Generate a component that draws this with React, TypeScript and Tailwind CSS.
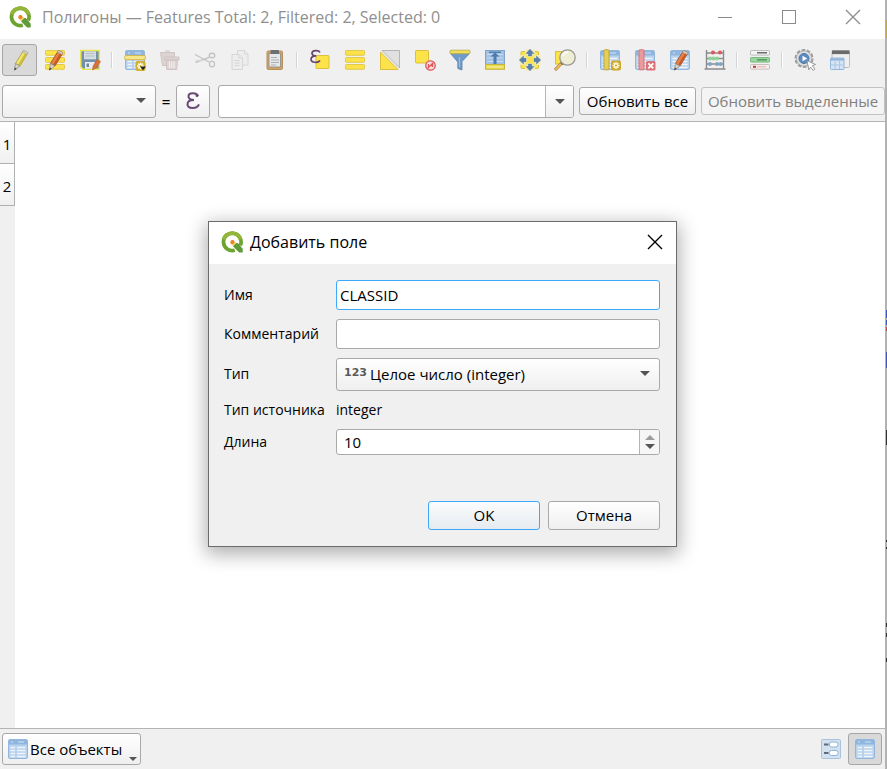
import { useState } from "react";
import type { ReactNode } from "react";

const Icon = ({ children }: { children: ReactNode }) => (
  <svg viewBox="0 0 22 22" aria-hidden="true" className="h-[22px] w-[22px] shrink-0">
    {children}
  </svg>
);

const QgisLogo = () => (
  <svg viewBox="0 0 24 24" aria-hidden="true" className="h-6 w-6 shrink-0">
    <path d="M20.300 15.500A8.800 8.800 0 1 0 14.800 20.300" fill="none" stroke="#6da32f" strokeWidth="3.700" />
    <path d="M3.600 9.500A8.800 8.800 0 0 1 20.400 9.500" fill="none" stroke="#93b53a" strokeWidth="3.700" />
    <path d="M14.500 13h3.300l4.900 5.700v3.800h-3.600l-6.100-6.200z" fill="#5f9b36" />
    <path d="M12 9.500l4.500 3.500-3.500 3.200-3-3.200z" fill="#f4cf78" />
    <circle cx="12.400" cy="12" r="2" fill="#ee7d23" />
  </svg>
);

const Table = () => (
  <g transform="translate(1 1)">
    <rect x=".5" y=".5" width="19" height="19" rx="1.500" fill="#b9d2ec" stroke="#93b6dc" />
    <rect x="1" y="1" width="18" height="4.500" fill="#8fb6df" />
    <path
      d="M2.500 8.500h4.500M9 8.500h8.500M2.500 11.500h4.500M9 11.500h8.500M2.500 14.500h4.500M9 14.500h8.500M2.500 17.500h4.500M9 17.500h8.500"
      stroke="#eef4fb"
      strokeWidth="1.500"
    />
    <path d="M3 3h2M10 3h6" stroke="#b9d3ee" strokeWidth="1.500" />
  </g>
);

const Pencil = ({ body, shade, dark }: { body: string; shade: string; dark: string }) => (
  <g>
    <path d="M14.500 1.500l4.500 2.300-8 13.200-4.600-2.500z" fill={body} stroke={dark} strokeWidth=".8" />
    <path d="M17 2.800l2 1-8 13.200-2-1.100z" fill={shade} />
    <path d="M14.500 1.500l4.500 2.300-1 1.700-4.500-2.400z" fill="#d8d5cd" stroke="#9d9a92" strokeWidth=".5" />
    <path d="M6.400 14.500l4.600 2.500-5.600 4.300z" fill="#d9d2c2" stroke="#888" strokeWidth=".7" />
    <path d="M5.400 21.300l.4-2.700 1.800 1.100z" fill="#333" />
  </g>
);

const YELLOW = "#fbe349";
const GOLD = "#dcbf3a";

const Gear = ({ fill, x, y }: { fill: string; x: number; y: number }) => (
  <g transform={`translate(${x} ${y})`}>
    <rect width="10" height="10" rx="2" fill={fill} />
    <path
      d="M5 1.500v7M1.500 5h7M2.600 2.600l4.800 4.800M7.400 2.600L2.600 7.400"
      stroke="#fffbe0"
      strokeWidth="1.400"
    />
    <circle cx="5" cy="5" r="1.100" fill={fill} />
  </g>
);

const Stripes = () => (
  <g fill={YELLOW} stroke={GOLD} strokeWidth=".8">
    <rect x="1.500" y="1.500" width="19" height="4.800" rx=".8" />
    <rect x="1.500" y="8.500" width="19" height="4.800" rx=".8" />
    <rect x="1.500" y="15.500" width="19" height="4.800" rx=".8" />
  </g>
);

const orangePencil = <Pencil body="#e87f45" shade="#c65a28" dark="#8f4f30" />;

const icons: Record<string, ReactNode> = {
  edit: <Pencil body="#f0e56a" shade="#cdbb35" dark="#a59a4e" />,
  multi: (
    <>
      <Stripes />
      {orangePencil}
    </>
  ),
  save: (
    <>
      <path d="M1.800 1.500h18.500v18.800H4L1.800 18z" fill="#7390aa" stroke="#ede552" strokeWidth="1.500" />
      <rect x="5" y="2.300" width="12" height="8" fill="#d5dce2" />
      <path d="M6.500 4.500h9M6.500 7h9" stroke="#b4bfc8" />
      <rect x="6" y="13" width="10" height="6.800" fill="#e9edf0" />
      <rect x="7.500" y="14.500" width="2.500" height="3.500" fill="#6d879f" />
      <path d="M18.300 10.500l3.200 1.900-4.200 6.400-3.800 2.200.7-4.200z" fill="#df6f3a" stroke="#b45a30" strokeWidth=".6" />
    </>
  ),
  addFeature: (
    <>
      <Table />
      <rect x=".8" y="6.500" width="20.500" height="4.200" rx=".8" fill="#f5e68c" stroke="#d1b445" strokeWidth=".9" />
      <Gear fill="#d3ae2a" x={11.5} y={12} />
      <path d="M16 17.500h6l-3 3.800z" fill="#222" />
    </>
  ),
  trash: (
    <g stroke="#cfc4c3" strokeWidth="1" fill="#ddd3d2">
      <path d="M1.500 3.500h14v5h-3v8h-9z" />
      <path d="M6 2h5" />
      <path d="M5.500 8h14.500v3H5.500zM7 11h11.500l-.8 9.500H7.800z" />
      <path d="M10.500 12.500v6.500M12.800 12.500v6.500M15 12.500v6.500" stroke="#f6f2f2" />
    </g>
  ),
  cut: (
    <g fill="none" stroke="#c6c2c2" strokeWidth="1.400">
      <path d="M1 5.500l14 7.500M1.500 13.500l13.500-5" />
      <path d="M1.500 11.500h7" stroke="#dcd9d9" />
      <ellipse cx="18" cy="6.500" rx="2.800" ry="2.300" />
      <ellipse cx="18" cy="15" rx="2.500" ry="2.900" />
    </g>
  ),
  copy: (
    <g fill="#ededed" stroke="#d6d6d6" strokeWidth="1">
      <path d="M8.500 1.500h7l3.500 3.500v11H8.500z" />
      <path d="M15.500 1.500V5H19" />
      <path d="M3 5.500h7l3.500 3.500v11.500H3z" />
      <path d="M10 5.500V9h3.500M5.500 11.500h5M5.500 14h5M5.500 16.500h5" />
    </g>
  ),
  paste: (
    <>
      <rect x="3" y="2" width="15.500" height="18.500" rx="1.200" fill="#cfa468" stroke="#b98f58" />
      <rect x="5" y="4.500" width="11.500" height="13.500" fill="#e6e7e8" stroke="#8b8b8b" strokeWidth=".8" />
      <rect x="6.500" y="1" width="8.500" height="4" rx=".8" fill="#6c7073" />
      <path d="M7 8.500h6M7 11h8M7 13.500h8M7 16h5" stroke="#adb2b5" strokeWidth="1.200" />
    </>
  ),
  selectExpr: (
    <>
      <rect x="7" y="6.500" width="13" height="13" rx=".8" fill={YELLOW} stroke={GOLD} />
      <path
        d="M11 3.500C9.800.8 3 1.200 3 4.200c0 2 2.300 2.600 4.300 2.600-3 0-5.300.9-5.300 3.500 0 3.600 7.300 3.900 9 1.200"
        fill="none"
        stroke="#6a4772"
        strokeWidth="1.700"
      />
    </>
  ),
  selectAll: <Stripes />,
  invert: (
    <>
      <path d="M3 1.500h17.500V19z" fill="#e0e0e0" stroke="#b5b5b5" />
      <path d="M1.500 3L19 20.500H1.500z" fill={YELLOW} stroke={GOLD} />
    </>
  ),
  deselect: (
    <>
      <rect x="1.500" y="1.500" width="13" height="12.500" rx=".8" fill={YELLOW} stroke={GOLD} />
      <circle cx="16.500" cy="16.500" r="4.700" fill="#f8dddd" stroke="#dd5459" strokeWidth="1.300" />
      <path d="M13.500 19.500l6-6M14.500 15v3.500M18.500 14.500V18" stroke="#dd5459" strokeWidth="1.300" />
    </>
  ),
  filter: (
    <>
      <path d="M1.500 4.500l7.300 8.500v6.500l4.200 1.500v-8.500l7.500-8z" fill="#6f9bc9" stroke="#5b80aa" strokeWidth=".8" />
      <rect x="1" y="1.200" width="20" height="3.500" rx=".8" fill="#efdf56" stroke="#b5a64c" strokeWidth=".8" />
      <path d="M10.500 8v10" stroke="#9dbee0" strokeWidth="1.200" />
    </>
  ),
  moveTop: (
    <>
      <rect x="1.500" y="1.500" width="19" height="14" fill="#a3c2e3" stroke="#80a4cb" />
      <path d="M3 5.500h16M3 9h16M3 12.500h16" stroke="#c9dcef" />
      <rect x="1.500" y="15.500" width="19" height="4.800" fill="#e9da4c" stroke="#c6b340" />
      <path d="M11 3.500l4.500 4h-3v7.500H9.500V7.500h-3z" fill="#4c7bb0" />
      <path d="M5 3.200h12" stroke="#4c7bb0" strokeWidth="1.400" />
      <path d="M3 18h16" stroke="#fbf5a5" />
    </>
  ),
  pan: (
    <>
      <rect x="2" y="2.500" width="17.500" height="17" rx=".8" fill={YELLOW} stroke={GOLD} />
      <path d="M6 .5h10v5l-5 3.500-5-3.500zM6 21.500h10v-5L11 13l-5 3.500zM.5 6v10h5L9 11 5.500 6zM21.500 6v10h-5L13 11l3.500-5z" fill="#f3ecb5" />
      <rect x="8" y="8" width="6" height="6" fill={YELLOW} />
      <g fill="#5580b2" stroke="#47709f" strokeWidth=".4">
        <path d="M11 .3l4 4.200h-2.300V7H9.300V4.500H7z" />
        <path d="M11 21.700l4-4.200h-2.300V15H9.300v2.500H7z" />
        <path d="M.3 11l4.200-4v2.300H7v3.400H4.500V15z" />
        <path d="M21.700 11l-4.200-4v2.300H15v3.400h2.500V15z" />
      </g>
    </>
  ),
  zoom: (
    <>
      <rect x="1.500" y="2.500" width="12" height="12.500" fill={YELLOW} stroke={GOLD} />
      <path d="M8.500 13.500l-1.500 1.700" stroke="#444" strokeWidth="3" />
      <path d="M7.300 14.500L1 21" stroke="#a98445" strokeWidth="3.200" />
      <path d="M6.800 15.200L1.500 20.600" stroke="#f2bd52" strokeWidth="1.800" />
      <circle cx="13.500" cy="8.500" r="7.700" fill="#eeedd6" stroke="#9b9b93" strokeWidth="1.300" />
      <path d="M9 7a5 5 0 0 1 5-3.800" stroke="#fff" strokeWidth="1.600" fill="none" />
    </>
  ),
  newField: (
    <>
      <Table />
      <rect x="5" y=".8" width="5" height="20" rx=".8" fill="#e5cf5a" stroke="#bfa53a" />
      <Gear fill="#cda92c" x={12} y={11.5} />
    </>
  ),
  delField: (
    <>
      <Table />
      <rect x="5" y=".8" width="5" height="20" rx=".8" fill="#eb9a9a" stroke="#d77577" />
      <rect x="12" y="12" width="9.500" height="9.500" rx="1.500" fill="#dc7277" />
      <path d="M14.300 14.300l5 5M19.300 14.300l-5 5" stroke="#fff" strokeWidth="1.800" />
    </>
  ),
  organize: (
    <>
      <Table />
      {orangePencil}
    </>
  ),
  abacus: (
    <>
      <path
        d="M2.500 1v19M19.500 1v19M.5 20h21M2.500 4h17M2.500 9.500h17M2.500 15h17"
        fill="none"
        stroke="#8b8b8d"
        strokeWidth="1.400"
      />
      <g fill="#dc565b">
        <circle cx="9" cy="3.500" r="2" />
        <circle cx="16" cy="3.500" r="2" />
      </g>
      <g fill="#93cf98">
        <circle cx="6" cy="9.500" r="2" />
        <circle cx="9.500" cy="9.500" r="2" />
        <circle cx="13" cy="9.500" r="2" />
      </g>
      <g fill="#7fa6c4">
        <circle cx="6" cy="15" r="2" />
        <circle cx="13" cy="15" r="2" />
        <circle cx="16.500" cy="15" r="2" />
      </g>
    </>
  ),
  conditional: (
    <g strokeWidth=".9">
      <rect x="1.500" y="1.500" width="19" height="4.600" rx=".8" fill="#f4f4f4" stroke="#b5b5b5" />
      <rect x="1.500" y="8.500" width="19" height="4.600" rx=".8" fill="#97d79b" stroke="#74b27a" />
      <rect x="1.500" y="15.500" width="19" height="4.600" rx=".8" fill="#f7eeee" stroke="#c5b8b8" />
      <path d="M8 3.800h10" stroke="#555" strokeWidth="1.300" />
      <path d="M8 10.800h10" stroke="#4c8a54" strokeWidth="1.300" />
      <path d="M4 17.800h3" stroke="#c0373d" strokeWidth="2" />
      <path d="M8 17.800h9" stroke="#e8a9ab" />
    </g>
  ),
  actions: (
    <>
      <circle cx="10" cy="9.500" r="8.300" fill="none" stroke="#9c9c9c" strokeWidth="2.400" strokeDasharray="3.600 1.600" />
      <circle cx="10" cy="9.500" r="7.600" fill="#e0e0e0" stroke="#a8a8a8" strokeWidth=".8" />
      <circle cx="10" cy="9.500" r="5" fill="#5f8cc0" stroke="#4a76aa" />
      <path d="M8.500 6.700l4.700 2.800-4.700 2.800z" fill="#fff" />
      <path
        d="M13 11.500l8.500 4-3.200 1.200 2.700 3.200-1.800 1.500-2.600-3.300-1.800 2.700z"
        fill="#fff"
        stroke="#8b8b8b"
        strokeWidth=".9"
      />
    </>
  ),
  dock: (
    <>
      <rect x="3" y="1.500" width="17.500" height="17" rx="1" fill="#efefef" stroke="#bdbdbd" />
      <rect x="3" y="1.500" width="17.500" height="3.600" fill="#6b6b6b" />
      <rect x="1.500" y="9" width="13.500" height="11.500" rx=".8" fill="#d5e4f4" stroke="#93b6dc" />
      <path d="M1.500 10.500h13.500" stroke="#8fb3da" strokeWidth="2" />
      <path d="M6 12v8M10.500 12v8M2 16h12.500" stroke="#a9c7e6" />
    </>
  ),
  form: (
    <>
      <rect x="1.500" y="1.500" width="19" height="19" rx="1" fill="#d3e0ee" stroke="#a9c2de" />
      <rect x="9.500" y="4" width="8.500" height="5" rx="2" fill="#fff" stroke="#8fb2d8" />
      <rect x="9.500" y="12.500" width="8.500" height="5" rx="2" fill="#fff" stroke="#8fb2d8" />
      <path d="M4 6.500h4.500M4 15h4.500" stroke="#596b80" strokeWidth="1.800" />
    </>
  ),
  table: <Table />,
};

const tools: [string, string][][] = [
  [["edit", "Режим правки"], ["multi", "Правка нескольких объектов"], ["save", "Сохранить правки"]],
  [["addFeature", "Добавить объект"], ["trash", "Удалить"], ["cut", "Вырезать"], ["copy", "Копировать"], ["paste", "Вставить"]],
  [
    ["selectExpr", "Выделить по выражению"],
    ["selectAll", "Выделить всё"],
    ["invert", "Обратить выделение"],
    ["deselect", "Снять выделение"],
    ["filter", "Фильтр"],
    ["moveTop", "Переместить наверх"],
    ["pan", "Центрировать"],
    ["zoom", "Увеличить"],
  ],
  [["newField", "Новое поле"], ["delField", "Удалить поле"], ["organize", "Управление столбцами"], ["abacus", "Калькулятор полей"]],
  [["conditional", "Условное форматирование"]],
  [["actions", "Действия"], ["dock", "Закрепить таблицу"]],
];

const Arrow = ({ className }: { className: string }) => (
  <svg viewBox="0 0 12 6" aria-hidden="true" className={className}>
    <path d="M0 0h12L6 6z" fill="currentColor" />
  </svg>
);

const CloseMark = ({ className = "" }: { className?: string }) => (
  <svg viewBox="0 0 16 16" aria-hidden="true" className={"h-4 w-4 " + className}>
    <path d="M1 1l14 14M15 1L1 15" stroke="currentColor" strokeWidth="1.400" />
  </svg>
);

const raised = "rounded-[3px] border border-[#a9a9a9] bg-linear-to-b from-white to-[#efefef]";
const field = "w-full min-w-0 rounded-[3px] border bg-white text-[15px] outline-none";

function TitleBar() {
  return (
    <header className="flex h-[39px] shrink-0 items-center bg-white pb-[5px] pl-2 text-[#8f8f8f]">
      <QgisLogo />
      <h1 className="ml-[10px] flex-1 text-[16px] whitespace-nowrap">
        Полигоны — Features Total: 2, Filtered: 2, Selected: 0
      </h1>
      <div className="flex">
        <button aria-label="Свернуть" className="flex h-8 w-16 items-center justify-center">
          <span className="h-px w-[14px] bg-[#8a8a8a]" />
        </button>
        <button aria-label="Развернуть" className="flex h-8 w-16 items-center justify-center">
          <span className="h-[14px] w-[14px] border border-[#8a8a8a]" />
        </button>
        <button aria-label="Закрыть" className="flex h-8 w-16 items-center justify-center">
          <CloseMark />
        </button>
      </div>
    </header>
  );
}

function Toolbar() {
  return (
    <div role="toolbar" className="flex h-[42px] shrink-0 items-center pl-[2px]">
      {tools.map((group, i) => (
        <div key={i} className="flex items-center">
          {i > 0 && (
            <span className="flex w-[10px] justify-center">
              <span className="h-4 w-[2px] border-l border-[#d4d4d4] bg-white" />
            </span>
          )}
          {group.map(([name, label]) => (
            <button
              key={name}
              aria-label={label}
              className={
                "flex h-8 w-[35px] items-center justify-center rounded-[3px] border " +
                (name === "edit" ? "border-[#a6a6a6] bg-[#d9d9d9]" : "border-transparent")
              }
            >
              <Icon>{icons[name]}</Icon>
            </button>
          ))}
        </div>
      ))}
    </div>
  );
}

function UpdateBar() {
  return (
    <div className="flex h-[41px] shrink-0 items-center border-b border-[#b4b4b4] pl-[2px]">
      <div className="relative w-[154px]">
        <select aria-label="Поле" className={raised + " block h-[33px] w-full appearance-none"} />
        <Arrow className="pointer-events-none absolute top-[13px] right-[10px] h-[5px] w-[10px] text-[#555]" />
      </div>
      <span className="w-5 text-center text-[15px] font-semibold">=</span>
      <button aria-label="Выражение" className={raised + " flex h-[33px] w-[34px] items-center justify-center"}>
        <svg viewBox="0 0 22 22" aria-hidden="true" className="h-[22px] w-[22px]">
          <path
            d="M16 6C14.500 2.200 6.500 2.300 6.500 6.300c0 2.700 2.500 3.700 5.500 3.700-3.700 0-6.500 1.300-6.500 4.200 0 5 9.500 5 11.500.2"
            fill="none"
            stroke="#6a4a74"
            strokeWidth="2"
          />
          <circle cx="15" cy="5.500" r="1.500" fill="#6a4a74" />
        </svg>
      </button>
      <div className="ml-2 flex h-[33px] min-w-0 flex-1 rounded-[3px] border border-[#a9a9a9] bg-white">
        <input aria-label="Значение" className="min-w-0 flex-1 bg-transparent px-1 text-[15px] outline-none" />
        <button
          aria-label="Показать список"
          className="flex w-7 items-center justify-center rounded-r-[2px] border-l border-[#b5b5b5] bg-linear-to-b from-white to-[#efefef] text-[#555]"
        >
          <Arrow className="h-[5px] w-[10px]" />
        </button>
      </div>
      <button className={raised + " ml-[5px] h-7 w-[117px] text-[15px] whitespace-nowrap"}>Обновить все</button>
      <button
        disabled
        className="ml-[5px] h-7 w-[184px] rounded-[3px] border border-[#c2c2c2] bg-[#f4f4f4] text-[15px] whitespace-nowrap text-[#808080]"
      >
        Обновить выделенные
      </button>
    </div>
  );
}

function AddFieldDialog() {
  const [name, setName] = useState("CLASSID");
  const [length, setLength] = useState("10");
  return (
    <div className="pointer-events-none absolute inset-0 flex items-center justify-center pb-[2px]">
      <form
        role="dialog"
        aria-labelledby="dialog-title"
        onSubmit={(e) => e.preventDefault()}
        className="pointer-events-auto w-[469px] border border-[#6b6b6b] bg-[#f0f0f0] shadow-[0_5px_18px_2px_rgba(0,0,0,0.32)]"
      >
        <div className="flex h-[42px] items-center bg-white pr-[13px] pb-[2px] pl-[11px]">
          <QgisLogo />
          <h2 id="dialog-title" className="ml-[6px] flex-1 text-[16px]">
            Добавить поле
          </h2>
          <button type="button" aria-label="Закрыть">
            <CloseMark className="text-black" />
          </button>
        </div>
        <div className="grid grid-cols-[112px_1fr] items-center gap-y-[9px] pt-4 pr-4 pl-[15px] text-[14px] leading-5">
          <label htmlFor="name">Имя</label>
          <input
            id="name"
            value={name}
            onChange={(e) => setName(e.target.value)}
            className={field + " h-[30px] border-[#3da9fc] px-[3px]"}
          />
          <label htmlFor="comment">Комментарий</label>
          <input id="comment" className={field + " h-[30px] border-[#a9a9a9] px-[3px]"} />
          <label htmlFor="type">Тип</label>
          <div className="relative">
            <select id="type" className={raised + " block h-[33px] w-full appearance-none pl-[33px] text-[15px]"}>
              <option>Целое число (integer)</option>
            </select>
            <span className="pointer-events-none absolute top-[5px] left-2 font-['DejaVu_Sans',sans-serif] text-[11px] font-bold text-[#5a5a5a]">
              123
            </span>
            <Arrow className="pointer-events-none absolute top-[13px] right-[10px] h-[5px] w-[10px] text-[#555]" />
          </div>
          <span>Тип источника</span>
          <span>integer</span>
          <label htmlFor="length">Длина</label>
          <div className="flex h-[26px] rounded-[3px] border border-[#a9a9a9] bg-white">
            <input
              id="length"
              value={length}
              onChange={(e) => setLength(e.target.value)}
              className="min-w-0 flex-1 bg-transparent pl-[7px] text-[15px] outline-none"
            />
            <span className="flex w-5 flex-col items-center justify-center gap-1 rounded-r-[2px] border-l border-[#b5b5b5] bg-[#f6f6f6]">
              <button type="button" aria-label="Больше">
                <Arrow className="block h-[5px] w-[10px] rotate-180 text-[#9d9d9d]" />
              </button>
              <button type="button" aria-label="Меньше">
                <Arrow className="block h-[5px] w-[10px] text-[#555]" />
              </button>
            </span>
          </div>
        </div>
        <div className="mt-[46px] flex justify-end gap-2 px-4 pb-4 text-[15px]">
          <button className="h-[29px] w-28 rounded-[3px] border border-[#3da9fc] bg-linear-to-b from-[#fbfcfd] to-[#e6ebf0]">
            OK
          </button>
          <button type="button" className={raised + " h-[29px] w-28"}>
            Отмена
          </button>
        </div>
      </form>
    </div>
  );
}

export default function App() {
  return (
    <div className="relative flex h-screen overflow-hidden bg-[#f0f0f0] font-['Open_Sans',sans-serif] text-black">
      <div className="relative flex min-w-0 flex-1 flex-col">
        <TitleBar />
        <Toolbar />
        <UpdateBar />
        <main className="flex min-h-0 flex-1 border-b border-[#b4b4b4] bg-white">
          <ol className="w-[15px] bg-[#f0f0f0] text-[15px]">
            {[1, 2].map((n) => (
              <li
                key={n}
                className="flex h-[42px] items-center justify-center border-r border-b border-[#b0b0b0] bg-linear-to-b from-white to-[#f0f0f0] pt-[3px]"
              >
                {n}
              </li>
            ))}
          </ol>
        </main>
        <footer className="flex h-10 shrink-0 items-center justify-between pr-[3px] pl-[2px]">
          <button className={raised + " relative flex h-8 w-[139px] items-center pl-1 text-[15px] whitespace-nowrap"}>
            <Icon>{icons.table}</Icon>
            <span className="ml-px">Все объекты</span>
            <Arrow className="absolute right-[3px] bottom-[3px] h-[4px] w-[8px] text-[#555]" />
          </button>
          <div className="flex">
            <button aria-label="Форма" className="flex h-8 w-[34px] items-center justify-center">
              <Icon>{icons.form}</Icon>
            </button>
            <button
              aria-label="Таблица"
              className="flex h-8 w-[34px] items-center justify-center rounded-[3px] border border-[#a6a6a6] bg-[#d9d9d9]"
            >
              <Icon>{icons.table}</Icon>
            </button>
          </div>
        </footer>
        <AddFieldDialog />
      </div>
      <svg aria-hidden="true" className="h-full w-[2px] shrink-0 bg-[#b2b2b2]">
        <path d="M1.500 20v18" stroke="#b9a94a" />
        <path d="M1.500 310v8M1.500 320v5M1.500 352v16" stroke="#3f57c4" />
        <path d="M1.500 327v4" stroke="#c43f4c" />
        <path d="M1.500 430v15M1.500 540v2M1.500 547v2M1.500 623v4M1.500 633v4M1.500 658v4" stroke="#333" />
      </svg>
    </div>
  );
}
